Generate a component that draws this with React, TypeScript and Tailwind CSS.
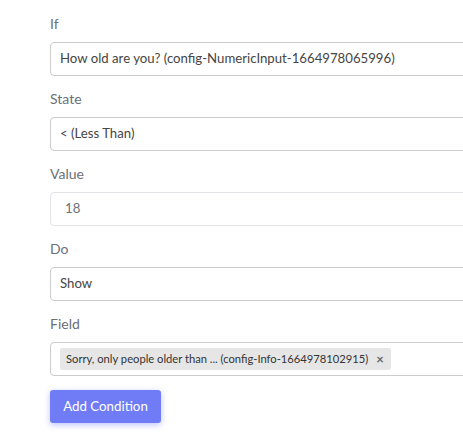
const rows = [
  { label: 'If', value: 'How old are you? (config-NumericInput-1664978065996)' },
  { label: 'State', value: '< (Less Than)' },
];

function Label({ children }: { children: React.ReactNode }) {
  return <div className="text-[14px] leading-5 text-[#6b6f76] mb-2">{children}</div>;
}

function SelectBox({ children }: { children: React.ReactNode }) {
  return (
    <div className="h-[34px] w-[460px] rounded-[4px] border border-[#cccccc] bg-white flex items-center px-[9px] text-[13.2px] text-[#454545]">
      {children}
    </div>
  );
}

export default function App() {
  return (
    <div className="w-[463px] h-[437px] overflow-hidden bg-white" style={{ fontFamily: 'Lato, "Noto Sans", sans-serif' }}>
      <div className="pl-[50px] pt-[14px] flex flex-col">
        {rows.map((r) => (
          <div key={r.label} className="mb-[13px]">
            <Label>{r.label}</Label>
            <SelectBox>{r.value}</SelectBox>
          </div>
        ))}

        <div className="mb-[13px]">
          <Label>Value</Label>
          <div className="h-[34px] w-[460px] rounded-[4px] border border-[#e1e3e6] bg-white flex items-center px-[14px] text-[13.2px] text-[#6d7178]">
            18
          </div>
        </div>

        <div className="mb-[13px]">
          <Label>Do</Label>
          <SelectBox>Show</SelectBox>
        </div>

        <div className="mb-[14px]">
          <Label>Field</Label>
          <div className="h-[34px] w-[460px] rounded-[4px] border border-[#cccccc] bg-white flex items-center px-[9px]">
            <span className="h-[22px] flex items-center gap-[8px] rounded-[2px] bg-[#e6e6e6] pl-[6px] pr-[7px] text-[11.2px] text-[#333]">
              Sorry, only people older than ... (config-Info-1664978102915)
              <span className="text-[#666] text-[13px] leading-none font-bold">×</span>
            </span>
          </div>
        </div>

        <button className="w-[111px] h-[33px] rounded-[3px] bg-[#6f7cf5] text-white text-[13.3px] shadow-[0_2px_6px_rgba(111,124,245,0.45)]">
          Add Condition
        </button>
      </div>
    </div>
  );
}
